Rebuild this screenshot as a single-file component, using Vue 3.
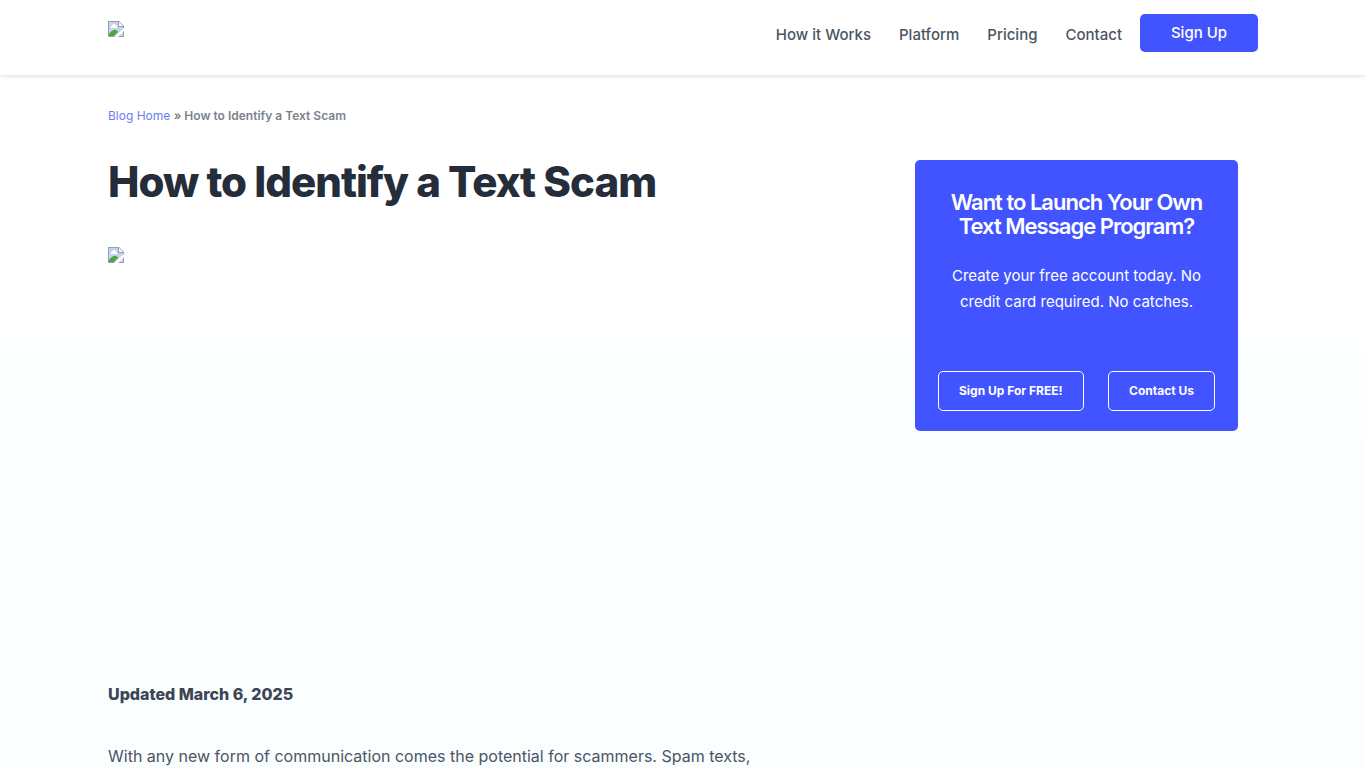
<script setup>
const links = ['How it Works', 'Platform', 'Pricing', 'Contact']
</script>

<template>
  <div class="page">
    <header class="header">
      <div class="container bar">
        <a href="#" class="logo" aria-label="Home">
          <svg width="16" height="16" viewBox="0 0 16 16">
            <g id="missing-image">
              <path d="M0 0H11L16 5V16H0Z" fill="#9a9fa6" />
              <path d="M1 1H10V6H15V15H1Z" fill="#c6d4f3" />
              <path d="M3 7V5H4V4H5V3H7V4H8V5H9V7Z" fill="#fff" />
              <path d="M1 15V13Q5 8 8 9Q10 10 10 11L6 15Z" fill="#4ca63f" />
              <path d="M6 16L16 7V10L10 16Z" fill="#fff" />
              <path d="M11 1V5H15Z" fill="#fff" />
            </g>
          </svg>
        </a>
        <nav class="nav">
          <a v-for="l in links" :key="l" href="#">{{ l }}</a>
          <a href="#" class="signup">Sign Up</a>
        </nav>
      </div>
    </header>
    <main class="container">
      <p class="crumbs"><a href="#">Blog Home</a> <strong>» How to Identify a Text Scam</strong></p>
      <div class="columns">
        <article>
          <h1>How to Identify a Text Scam</h1>
          <div class="hero">
            <svg width="16" height="16" viewBox="0 0 16 16">
              <use href="#missing-image" />
            </svg>
          </div>
          <p class="updated">Updated March 6, 2025</p>
          <p class="intro">With any new form of communication comes the potential for scammers. Spam texts,</p>
        </article>
        <aside class="card">
          <h2>Want to Launch Your Own Text Message Program?</h2>
          <p>Create your free account today. No credit card required. No catches.</p>
          <div class="actions">
            <a href="#">Sign Up For FREE!</a>
            <a href="#">Contact Us</a>
          </div>
        </aside>
      </div>
    </main>
  </div>
</template>

<style>
body {
  margin: 0;
}
</style>

<style scoped>
.page {
  box-sizing: border-box;
  height: 100vh;
  overflow: hidden;
  font-family: Inter, sans-serif;
  color: #3b4554;
  background: linear-gradient(#fff 40%, #fafeff 60%);
}
.container {
  box-sizing: border-box;
  max-width: 1150px;
  margin: 0 auto;
}
a {
  text-decoration: none;
}
svg {
  display: block;
}
.header {
  height: 75px;
  background: #fff;
  box-shadow: 0 1px 4px rgba(0, 0, 0, 0.15);
}
.bar {
  display: flex;
  justify-content: space-between;
  align-items: flex-start;
}
.logo {
  padding-top: 21px;
}
.nav {
  display: flex;
  gap: 28px;
  padding-top: 14px;
  font-size: 15px;
  font-weight: 500;
  line-height: 42px;
}
.nav a {
  color: #4b5563;
}
.nav .signup {
  width: 118px;
  height: 38px;
  margin-left: -10px;
  border-radius: 5px;
  background: #4154ff;
  color: #fff;
  line-height: 38px;
  text-align: center;
}
.crumbs {
  margin: 31px 0 0;
  font-size: 12px;
  line-height: 20px;
  color: #7b828c;
}
.crumbs a {
  color: #6b7cf0;
}
.crumbs strong {
  font-weight: 600;
}
.columns {
  display: flex;
  justify-content: space-between;
  align-items: flex-start;
  gap: 24px;
  padding: 34px 20px 0 0;
}
article {
  flex: 0 1 660px;
}
h1 {
  margin: 0;
  font-size: 42px;
  line-height: 44px;
  font-weight: 800;
  letter-spacing: -1px;
  color: #252d3a;
}
.hero {
  height: 434px;
  padding-top: 43px;
  box-sizing: border-box;
}
.updated {
  margin: 42px 0 34px;
  font-size: 16px;
  line-height: 28px;
  font-weight: 800;
}
.intro {
  margin: 0;
  font-size: 16px;
  line-height: 28px;
  color: #4b5563;
}
.card {
  box-sizing: border-box;
  flex: 0 0 323px;
  padding: 30px 23px 20px;
  border-radius: 5px;
  background: #4154ff;
  color: #fff;
  text-align: center;
}
h2 {
  margin: 0 0 25px;
  font-size: 22px;
  line-height: 24px;
  font-weight: 600;
  letter-spacing: -1px;
}
.card p {
  margin: 0 0 56px;
  font-size: 15px;
  line-height: 26px;
}
.actions {
  display: flex;
  justify-content: space-between;
}
.actions a {
  padding: 0 20px;
  border: 1px solid #fff;
  border-radius: 5px;
  color: #fff;
  font-size: 12px;
  font-weight: 700;
  line-height: 38px;
}
</style>
